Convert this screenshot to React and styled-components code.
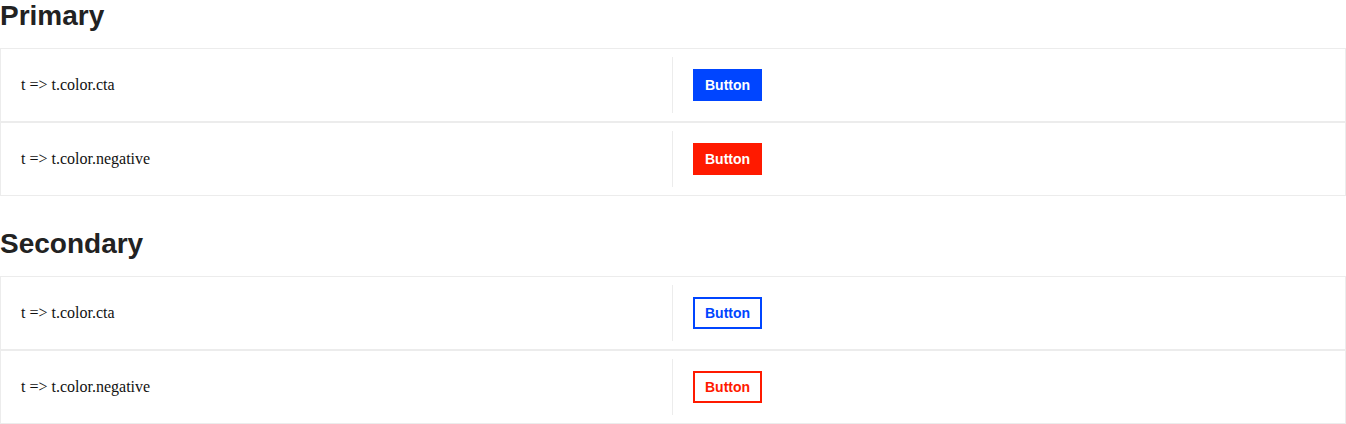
import React from 'react';
import styled, { createGlobalStyle } from 'styled-components';

const GlobalStyle = createGlobalStyle`
  body {
    margin: 0;
    background: #ffffff;
    font-family: "Liberation Serif", "Times New Roman", serif;
    color: #111;
  }
`;

const colors = {
  cta: '#0045ff',
  negative: '#ff1a00',
};

const Section = styled.section`
  & + & {
    margin-top: 32px;
  }
`;

const Heading = styled.h2`
  margin: 0 0 16px;
  font-family: "Liberation Sans", Arial, sans-serif;
  font-size: 28px;
  line-height: 32px;
  font-weight: 700;
  color: #222;
`;

const Row = styled.div`
  display: flex;
  border: 1px solid #ececec;
  padding: 8px 0;
`;

const Cell = styled.div`
  box-sizing: border-box;
  flex: 0 0 50%;
  display: flex;
  align-items: center;
  min-height: 56px;
  padding: 0 20px;
  font-size: 16px;

  &:first-child {
    border-right: 1px solid #ececec;
  }
`;

const Button = styled.button`
  height: 32px;
  padding: 0 10px;
  border: 2px solid ${p => p.$color};
  border-radius: 0;
  background: ${p => (p.$outline ? '#fff' : p.$color)};
  color: ${p => (p.$outline ? p.$color : '#fff')};
  font-family: "Liberation Sans", Arial, sans-serif;
  font-size: 14px;
  font-weight: 700;
  cursor: pointer;
`;

const sections = [
  { title: 'Primary', outline: false },
  { title: 'Secondary', outline: true },
];

export default function App() {
  return (
    <>
      <GlobalStyle />
      {sections.map(s => (
        <Section key={s.title}>
          <Heading>{s.title}</Heading>
          {Object.keys(colors).map(k => (
            <Row key={k}>
              <Cell>{`t => t.color.${k}`}</Cell>
              <Cell>
                <Button $color={colors[k]} $outline={s.outline}>Button</Button>
              </Cell>
            </Row>
          ))}
        </Section>
      ))}
    </>
  );
}
